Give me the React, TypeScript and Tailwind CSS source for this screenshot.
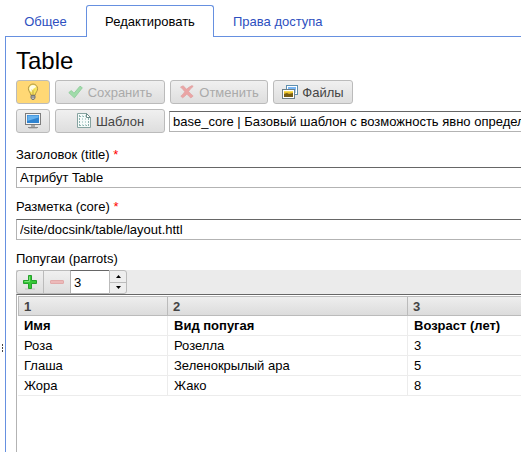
import React, { useState } from "react";

const buttonBase =
  "flex h-6 items-center justify-center gap-1 rounded-[3px] border border-[#bbbbbb] bg-linear-to-b text-[#444444]";

const grayFill = "from-[#f0f0f0] to-[#dedede]";

const fieldBase =
  "block h-[21px] w-full min-w-0 border border-r-0 border-[#b3b3b3] border-t-[#666666] bg-white pl-[3px] text-black outline-none";

function BulbIcon() {
  return (
    <svg width="16" height="18" viewBox="0 0 16 18" aria-hidden="true">
      <path d="M8 1a4.700 4.700 0 0 0-4.600 4.700c0 2.500 2 3.600 2.400 6.300h4.400c.4-2.700 2.400-3.800 2.400-6.300A4.700 4.700 0 0 0 8 1z" fill="#f8e55c" stroke="#a98f45" strokeWidth=".9" />
      <path d="M4.300 5.800C4.300 3.400 6 2 8 1.900c1.600 0 2.700.8 3.300 2C9.500 4.600 7 6 6.300 9.300 5 7.900 4.300 7 4.300 5.800z" fill="#fffde6" />
      <path d="M6.500 6.500l1 1.500M9.500 6.500l-1 1.500M7.500 8v4M8.500 8v4" fill="none" stroke="#c3a850" strokeWidth=".5" />
      <path d="M6 12.500h4V15l-1 1.500H7L6 15z" fill="#bdbdbd" stroke="#707070" strokeWidth=".9" />
      <path d="M6 14h4" stroke="#707070" strokeWidth=".8" />
    </svg>
  );
}

function MonitorIcon() {
  return (
    <svg width="16" height="16" viewBox="0 0 16 16" aria-hidden="true">
      <rect x=".5" y=".5" width="15" height="11" fill="#f4f4f4" stroke="#7c7c7c" />
      <rect x="2" y="2" width="12" height="8" fill="#2f83d0" />
      <path d="M2.500 2.500h11v2L2.500 8z" fill="#66b2ee" />
      <path d="M6 12h4v2H6z" fill="#a8a8a8" />
      <path d="M3 14.500h10" stroke="#8a8a8a" />
      <path d="M4 15.500h8" stroke="#c4c4c4" />
    </svg>
  );
}

function CheckIcon() {
  return (
    <svg width="16" height="16" viewBox="0 0 16 16" aria-hidden="true">
      <path d="M.8 8.600l2.600-2 2.600 2.700 6-7.100 2.300 1.600L6.400 13.800z" fill="#a0dcaa" stroke="#93cf9e" strokeLinejoin="round" />
    </svg>
  );
}

function CrossIcon() {
  return (
    <svg width="16" height="16" viewBox="0 0 16 16" aria-hidden="true">
      <path d="M1.500 3l2.600-1.200c1.300 1 2.500 2.200 3.500 3.500C9 3.800 10.800 2.500 13 1.600l1.200.8c-2 1.500-3.500 3.100-4.600 5 1.300 1.600 2.700 3.100 4.600 4.600l-2.300 1.900c-1.600-1.100-2.900-2.400-4-3.900-1.200 1.400-2.500 2.700-4.200 3.800L1.800 12.200c1.600-1.300 2.800-2.800 4-4.500C4.600 6.100 3.200 4.600 1.500 3z" fill="#eaa5a5" stroke="#e0a0a0" strokeWidth=".7" />
    </svg>
  );
}

function PicturesIcon() {
  return (
    <svg width="16" height="16" viewBox="0 0 16 16" aria-hidden="true">
      <rect x="4.500" y="1.500" width="11" height="9" fill="#ffffff" stroke="#5f8fae" />
      <rect x="6" y="3" width="8" height="6" fill="#79b7f5" />
      <path d="M6 6h8v3H6z" fill="#a9d3ee" />
      <rect x=".5" y="5.500" width="12" height="9" fill="#ffffff" stroke="#6d7f87" />
      <rect x="2" y="7" width="9" height="6" fill="#e7bd25" />
      <path d="M2 10l3-1 2 1 4-1v4H2z" fill="#765d14" />
      <path d="M2 7h9v1.200H2z" fill="#f6dc58" />
    </svg>
  );
}

function TemplateIcon() {
  return (
    <svg width="16" height="16" viewBox="0 0 16 16" aria-hidden="true">
      <path d="M1.500 .5h9l4 4v10h-13z" fill="#f6fbfa" stroke="#86a3a0" />
      <path d="M3.500 2v11.500M12.500 5v8.500M3 3.500h7M3 12.500h10" fill="none" stroke="#8db3af" strokeDasharray="2 1" />
      <path d="M6.500 2v11M9.500 2v11" stroke="#bfd9d6" strokeDasharray="2 1" />
      <path d="M10.500 .5v4h4z" fill="#ffffff" stroke="#6d8d8a" />
    </svg>
  );
}

function PlusIcon() {
  return (
    <svg width="16" height="16" viewBox="0 0 16 16" aria-hidden="true">
      <path d="M3 15h10" stroke="#c2c2c2" />
      <path d="M6.500 1.500h3v5h5v3h-5v5h-3v-5h-5v-3h5z" fill="#36c836" stroke="#24a12b" strokeLinejoin="round" />
      <path d="M7.500 2.500v5h-5" fill="none" stroke="#7be27b" />
    </svg>
  );
}

function MinusIcon() {
  return (
    <svg width="16" height="16" viewBox="0 0 16 16" aria-hidden="true">
      <rect x="1.500" y="6.500" width="13" height="3" rx=".5" fill="#ecb9b9" stroke="#e2aaaa" />
    </svg>
  );
}

function Arrow({ down = false }: { down?: boolean }) {
  return (
    <svg width="5" height="3" viewBox="0 0 5 3" aria-hidden="true">
      <path d={down ? "M0 0h5L2.500 3z" : "M0 3h5L2.500 0z"} fill="#000000" />
    </svg>
  );
}

function Tabs() {
  return (
    <nav className="ml-[5px] flex h-[37px] pt-[5px]">
      <a
        href="#general"
        className="flex w-[81px] items-center justify-center border-b border-[#6690e0] pt-0.5 text-[#2d4fc0]"
      >
        Общее
      </a>
      <a
        href="#edit"
        aria-current="page"
        className="flex w-32 items-center justify-center rounded-t-[3px] border border-b-0 border-[#6690e0] text-black"
      >
        Редактировать
      </a>
      <div className="flex flex-1 items-center border-b border-[#6690e0] pt-0.5 pl-[19px]">
        <a href="#access" className="text-[#2d4fc0]">
          Права доступа
        </a>
      </div>
    </nav>
  );
}

function Field({ id, label, value }: { id: string; label: string; value: string }) {
  return (
    <div className="mb-[11px]">
      <label htmlFor={id} className="block">
        {label} <span className="text-[#ff0000]">*</span>
      </label>
      <input id={id} type="text" defaultValue={value} className={`${fieldBase} mt-1`} />
    </div>
  );
}

const rows = [
  ["Имя", "Вид попугая", "Возраст (лет)"],
  ["Роза", "Розелла", "3"],
  ["Глаша", "Зеленокрылый ара", "5"],
  ["Жора", "Жако", "8"],
];

function ParrotTable() {
  return (
    <div className="flex-1 border-l border-t border-l-[#b3b3b3] border-t-[#666666] pl-px pt-px">
      <table className="w-full table-fixed border-separate border-spacing-0">
        <colgroup>
          <col className="w-[149px]" />
          <col className="w-60" />
          <col />
        </colgroup>
        <thead>
          <tr>
            {["1", "2", "3"].map((n) => (
              <th
                key={n}
                className="h-5 border-y border-l border-[#bbbbbb] bg-linear-to-b from-[#eeeeee] to-[#dcdcdc] px-[5px] pt-0.5 pb-0 text-left leading-4 font-bold text-[#444444]"
              >
                {n}
              </th>
            ))}
          </tr>
        </thead>
        <tbody>
          {rows.map((row, i) => (
            <tr key={row[0]}>
              {row.map((cell) => (
                <td
                  key={cell}
                  className={`h-5 border-b border-l border-[#ececec] px-1.5 py-0 leading-4 whitespace-nowrap first:border-l-0 ${i === 0 ? "font-bold" : ""}`}
                >
                  {cell}
                </td>
              ))}
            </tr>
          ))}
        </tbody>
      </table>
    </div>
  );
}

export default function App() {
  const [count, setCount] = useState("3");
  return (
    <div className="flex min-h-screen flex-col overflow-hidden bg-white font-['Liberation_Sans',Arial,sans-serif] text-[13px] leading-4 text-black">
      <Tabs />
      <div className="flex flex-1">
        <div className="flex w-[5px] shrink-0 flex-col items-center gap-px pt-[307px]" aria-hidden="true">
          <div className="h-0.5 w-px bg-[#444444]" />
          <div className="h-0.5 w-px bg-[#444444]" />
          <div className="h-0.5 w-px bg-[#444444]" />
        </div>
        <main className="flex min-w-0 flex-1 flex-col border-l border-[#6690e0] pl-2.5">
          <h1 className="mt-2.5 text-2xl leading-7">Table</h1>
          <div className="mt-[5px] flex gap-[5px]">
            <button
              type="button"
              aria-label="Подсказки"
              className={`${buttonBase} w-[34px] from-[#ffd875] to-[#ffd875]`}
            >
              <BulbIcon />
            </button>
            <button type="button" disabled className={`${buttonBase} ${grayFill} w-[110px] disabled:text-[#aaaaaa]`}>
              <CheckIcon />
              <span className="pt-0.5">Сохранить</span>
            </button>
            <button type="button" disabled className={`${buttonBase} ${grayFill} w-[98px] disabled:text-[#aaaaaa]`}>
              <CrossIcon />
              <span className="pt-0.5">Отменить</span>
            </button>
            <button type="button" className={`${buttonBase} ${grayFill} w-20`}>
              <PicturesIcon />
              <span className="pt-0.5">Файлы</span>
            </button>
          </div>
          <div className="mt-[5px] mb-3.5 flex items-center">
            <button type="button" aria-label="Просмотр" className={`${buttonBase} ${grayFill} mr-[5px] w-[34px] shrink-0`}>
              <MonitorIcon />
            </button>
            <button type="button" className={`${buttonBase} ${grayFill} mr-1 w-[110px] shrink-0`}>
              <TemplateIcon />
              <span className="pt-0.5">Шаблон</span>
            </button>
            <input
              type="text"
              aria-label="Шаблон"
              defaultValue="base_core | Базовый шаблон с возможность явно определить разметку"
              className={fieldBase}
            />
          </div>
          <Field id="title" label="Заголовок (title)" value="Атрибут Table" />
          <Field id="core" label="Разметка (core)" value="/site/docsink/table/layout.httl" />
          <label htmlFor="parrots">Попугаи (parrots)</label>
          <div className="mt-[3px] flex h-6 bg-[#ebebeb]">
            <button
              type="button"
              aria-label="Добавить"
              className={`${buttonBase} ${grayFill} w-[27px] rounded-r-none border-r-0`}
            >
              <PlusIcon />
            </button>
            <button
              type="button"
              disabled
              aria-label="Удалить"
              className={`${buttonBase} ${grayFill} w-[27px] rounded-none border-r-0`}
            >
              <MinusIcon />
            </button>
            <input
              id="parrots"
              type="text"
              value={count}
              onChange={(e) => setCount(e.target.value)}
              className="h-6 w-[39px] border border-r-0 border-[#b3b3b3] border-t-[#666666] bg-white px-[3px] outline-none"
            />
            <div className="flex w-[18px] flex-col rounded-r-[3px] border border-[#bbbbbb] bg-[#eeeeee]">
              <button
                type="button"
                aria-label="Больше"
                onClick={() => setCount(String(Number(count) + 1))}
                className="flex flex-1 items-center justify-center border-b border-[#bbbbbb]"
              >
                <Arrow />
              </button>
              <button
                type="button"
                aria-label="Меньше"
                onClick={() => setCount(String(Number(count) - 1))}
                className="flex flex-1 items-center justify-center"
              >
                <Arrow down />
              </button>
            </div>
          </div>
          <ParrotTable />
        </main>
      </div>
    </div>
  );
}
